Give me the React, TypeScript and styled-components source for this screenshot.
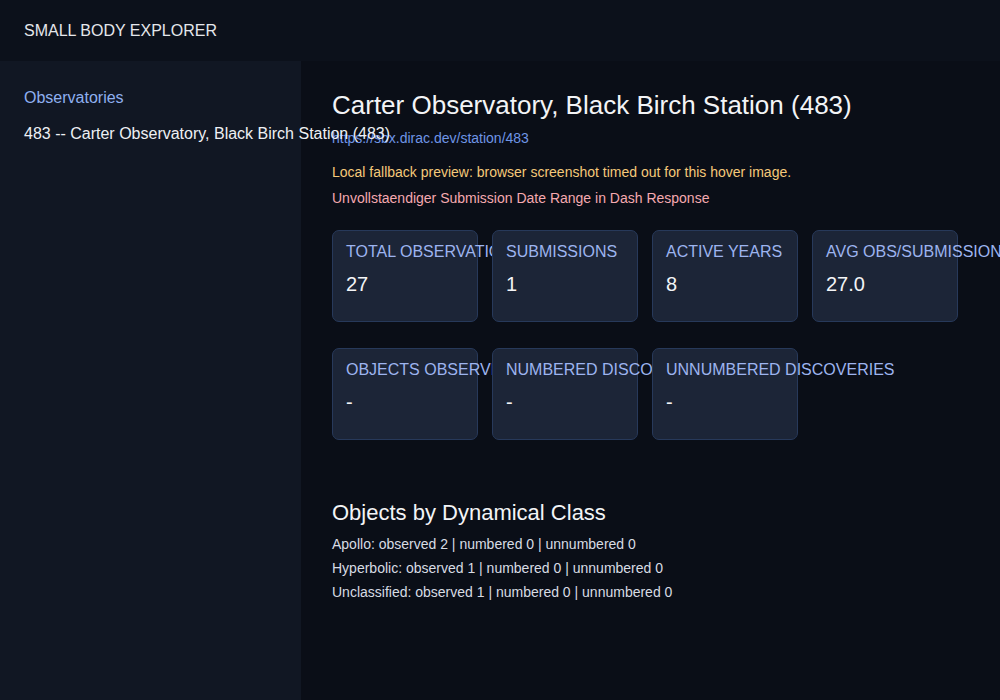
import React from "react";
import styled, { createGlobalStyle } from "styled-components";

const Global = createGlobalStyle`
  html, body { margin: 0; padding: 0; background: #0a0e17; }
  body { font-family: "Liberation Sans", Arial, sans-serif; color: #e5e7eb; }
  * { box-sizing: border-box; }
`;

const Page = styled.div`
  display: flex;
  flex-direction: column;
  height: 700px;
  overflow: hidden;
`;

const Header = styled.header`
  height: 61px;
  flex: 0 0 61px;
  background: #0c111b;
  display: flex;
  align-items: center;
  padding: 1px 24px 0 24px;
  font-size: 16px;
  color: #e5e7eb;
`;

const Body = styled.div`
  display: flex;
  flex: 1;
  min-height: 0;
`;

const Sidebar = styled.aside`
  width: 301px;
  flex: 0 0 301px;
  background: #111723;
  padding: 27px 24px;
  position: relative;
  z-index: 1;
`;

const SideTitle = styled.div`
  color: #8fb0f0;
  font-size: 16px;
  line-height: 20px;
  margin-bottom: 16px;
`;

const SideItem = styled.div`
  color: #eef0f4;
  font-size: 16px;
  line-height: 20px;
  white-space: nowrap;
`;

const Main = styled.main`
  flex: 1;
  background: #0a0e17;
  padding: 29px 31px 0 31px;
`;

const Title = styled.h1`
  margin: 0;
  font-size: 26px;
  line-height: 30px;
  font-weight: 400;
  color: #f3f4f6;
`;

const Link = styled.a`
  display: block;
  color: #6f95e6;
  font-size: 14px;
  line-height: 16px;
  text-decoration: none;
  margin-top: 10px;
`;

const Note = styled.div<{ $tone: "warn" | "err" }>`
  font-size: 14px;
  line-height: 16px;
  color: ${(p) => (p.$tone === "warn" ? "#f5c97a" : "#f5a9b0")};
  margin-top: ${(p) => (p.$tone === "warn" ? "18px" : "10px")};
`;

const CardRow = styled.div<{ $top: number }>`
  display: flex;
  gap: 14px;
  margin-top: ${(p) => p.$top}px;
`;

const Card = styled.div`
  position: relative;
  width: 146px;
  height: 92px;
  background: #1c2537;
  border: 1px solid #27395a;
  border-radius: 7px;
  padding: 12px 13px;
`;

const CardLabel = styled.div`
  font-size: 16px;
  line-height: 18px;
  color: #9db4ef;
  white-space: nowrap;
`;

const CardValue = styled.div`
  font-size: 20px;
  line-height: 24px;
  color: #f3f4f6;
  margin-top: 11px;
`;

const SectionTitle = styled.h2`
  font-size: 22px;
  line-height: 24px;
  font-weight: 400;
  color: #f3f4f6;
  margin: 61px 0 7px 0;
`;

const ClassLine = styled.div`
  font-size: 14px;
  line-height: 24px;
  color: #d8dce4;
`;

const row1 = [
  { label: "TOTAL OBSERVATIONS", value: "27" },
  { label: "SUBMISSIONS", value: "1" },
  { label: "ACTIVE YEARS", value: "8" },
  { label: "AVG OBS/SUBMISSION", value: "27.0" },
];
const row2 = [
  { label: "OBJECTS OBSERVED", value: "-" },
  { label: "NUMBERED DISCOVERIES", value: "-" },
  { label: "UNNUMBERED DISCOVERIES", value: "-" },
];

const classes = [
  "Apollo: observed 2 | numbered 0 | unnumbered 0",
  "Hyperbolic: observed 1 | numbered 0 | unnumbered 0",
  "Unclassified: observed 1 | numbered 0 | unnumbered 0",
];

export default function App() {
  return (
    <>
      <Global />
      <Page>
        <Header>SMALL BODY EXPLORER</Header>
        <Body>
          <Sidebar>
            <SideTitle>Observatories</SideTitle>
            <SideItem>483 -- Carter Observatory, Black Birch Station (483)</SideItem>
          </Sidebar>
          <Main>
            <Title>Carter Observatory, Black Birch Station (483)</Title>
            <Link href="#">https://sbx.dirac.dev/station/483</Link>
            <Note $tone="warn">Local fallback preview: browser screenshot timed out for this hover image.</Note>
            <Note $tone="err">Unvollstaendiger Submission Date Range in Dash Response</Note>
            <CardRow $top={24}>
              {row1.map((c) => (
                <Card key={c.label}>
                  <CardLabel>{c.label}</CardLabel>
                  <CardValue>{c.value}</CardValue>
                </Card>
              ))}
            </CardRow>
            <CardRow $top={26}>
              {row2.map((c) => (
                <Card key={c.label}>
                  <CardLabel>{c.label}</CardLabel>
                  <CardValue>{c.value}</CardValue>
                </Card>
              ))}
            </CardRow>
            <SectionTitle>Objects by Dynamical Class</SectionTitle>
            {classes.map((l) => (
              <ClassLine key={l}>{l}</ClassLine>
            ))}
          </Main>
        </Body>
      </Page>
    </>
  );
}
